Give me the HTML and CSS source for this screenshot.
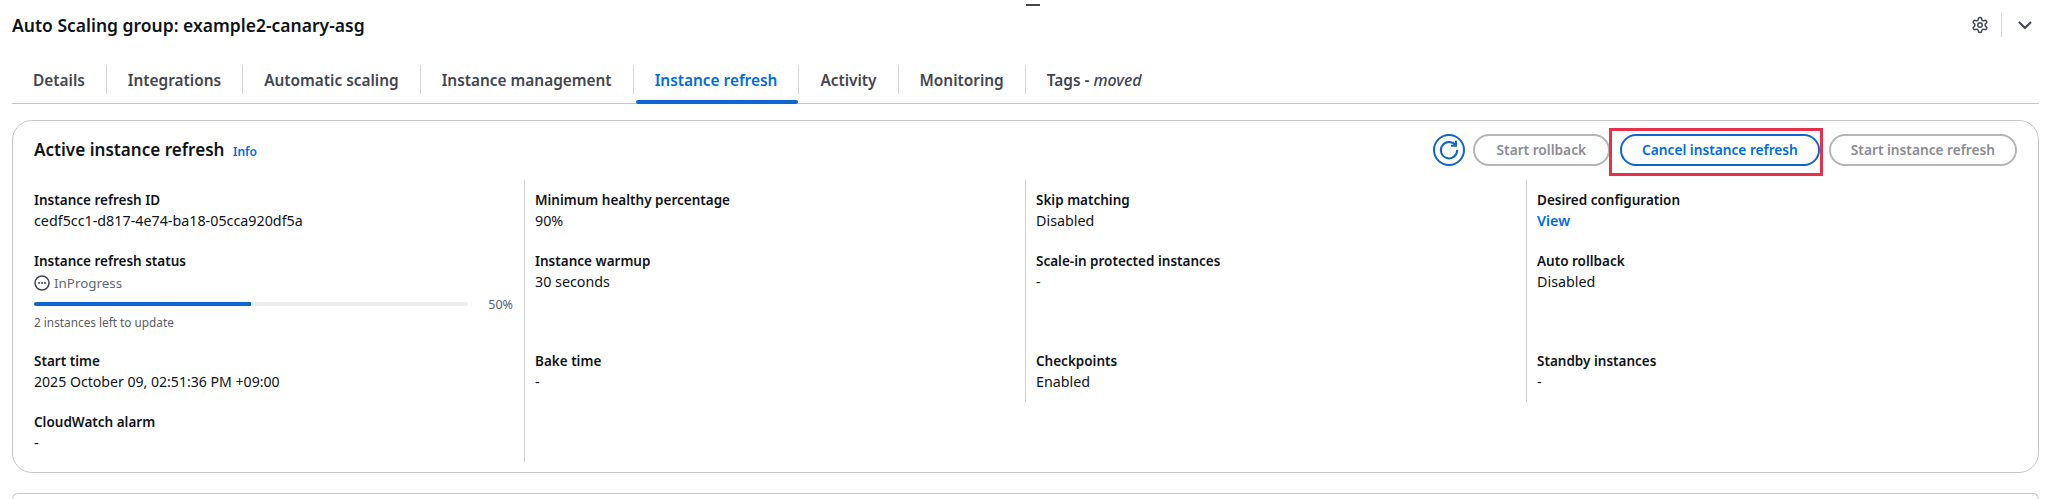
FILE: index.html
```html
<!DOCTYPE html>
<html lang="en">
<head>
<meta charset="utf-8">
<title>Auto Scaling group: example2-canary-asg</title>
<link rel="stylesheet" href="styles.css">
</head>
<body>
<div class="resize-mark"></div>
<div class="page">
  <header class="page-header">
    <h1 class="page-title">Auto Scaling group: example2-canary-asg</h1>
    <div class="page-tools">
      <svg class="icon-gear" viewBox="0 0 24 24" width="18" height="18"><path d="M12.22 2h-.44a2 2 0 0 0-2 2v.18a2 2 0 0 1-1 1.73l-.43.25a2 2 0 0 1-2 0l-.15-.08a2 2 0 0 0-2.73.73l-.22.38a2 2 0 0 0 .73 2.73l.15.1a2 2 0 0 1 1 1.72v.51a2 2 0 0 1-1 1.74l-.15.09a2 2 0 0 0-.73 2.73l.22.38a2 2 0 0 0 2.73.73l.15-.08a2 2 0 0 1 2 0l.43.25a2 2 0 0 1 1 1.73V20a2 2 0 0 0 2 2h.44a2 2 0 0 0 2-2v-.18a2 2 0 0 1 1-1.73l.43-.25a2 2 0 0 1 2 0l.15.08a2 2 0 0 0 2.73-.73l.22-.39a2 2 0 0 0-.73-2.73l-.15-.08a2 2 0 0 1-1-1.74v-.5a2 2 0 0 1 1-1.74l.15-.09a2 2 0 0 0 .73-2.73l-.22-.38a2 2 0 0 0-2.73-.73l-.15.08a2 2 0 0 1-2 0l-.43-.25a2 2 0 0 1-1-1.73V4a2 2 0 0 0-2-2z"/><circle cx="12" cy="12" r="3"/></svg>
      <span class="tools-divider"></span>
      <svg class="icon-chevron" viewBox="0 0 16 10" width="16" height="10"><path d="M2 2l6 6 6-6"/></svg>
    </div>
  </header>

  <nav class="tabs">
    <a class="tab"><span class="tab-label">Details</span></a>
    <a class="tab"><span class="tab-label">Integrations</span></a>
    <a class="tab"><span class="tab-label">Automatic scaling</span></a>
    <a class="tab"><span class="tab-label">Instance management</span></a>
    <a class="tab tab-active"><span class="tab-label">Instance refresh</span></a>
    <a class="tab"><span class="tab-label">Activity</span></a>
    <a class="tab"><span class="tab-label">Monitoring</span></a>
    <a class="tab"><span class="tab-label tab-label-last">Tags - <em>moved</em></span></a>
  </nav>

  <section class="card">
    <div class="card-header">
      <h2 class="card-title">Active instance refresh <a class="info-link">Info</a></h2>
      <div class="card-actions">
        <button class="btn-icon" type="button">
          <svg viewBox="0 0 32 32" width="32" height="32"><path d="M22.3 10.9a8.2 8.2 0 1 0 1.9 5.1"/><path d="M23 6.8v5h-5"/></svg>
        </button>
        <button class="btn btn-disabled btn-rollback" type="button">Start rollback</button>
        <span class="highlight">
          <button class="btn btn-primary" type="button">Cancel instance refresh</button>
        </span>
        <button class="btn btn-disabled" type="button">Start instance refresh</button>
      </div>
    </div>

    <div class="details">
      <div class="cell"><div class="label">Instance refresh ID</div><div class="value">cedf5cc1-d817-4e74-ba18-05cca920df5a</div></div>
      <div class="cell"><div class="label">Minimum healthy percentage</div><div class="value">90%</div></div>
      <div class="cell"><div class="label">Skip matching</div><div class="value">Disabled</div></div>
      <div class="cell"><div class="label">Desired configuration</div><div class="value"><a class="value-link">View</a></div></div>

      <div class="cell">
        <div class="label">Instance refresh status</div>
        <div class="status">
          <svg viewBox="0 0 16 16" width="16" height="16"><circle cx="8" cy="8" r="7"/><circle class="dot" cx="5" cy="8" r="1"/><circle class="dot" cx="8" cy="8" r="1"/><circle class="dot" cx="11" cy="8" r="1"/></svg>
          <span>InProgress</span>
        </div>
        <div class="progress">
          <div class="progress-track"><div class="progress-fill" style="width:50%"></div></div>
          <span class="progress-pct">50%</span>
        </div>
        <div class="progress-note">2 instances left to update</div>
      </div>
      <div class="cell"><div class="label">Instance warmup</div><div class="value">30 seconds</div></div>
      <div class="cell"><div class="label">Scale-in protected instances</div><div class="value">-</div></div>
      <div class="cell"><div class="label">Auto rollback</div><div class="value">Disabled</div></div>

      <div class="cell"><div class="label">Start time</div><div class="value value-date">2025 October 09, 02:51:36 PM +09:00</div></div>
      <div class="cell"><div class="label">Bake time</div><div class="value">-</div></div>
      <div class="cell"><div class="label">Checkpoints</div><div class="value">Enabled</div></div>
      <div class="cell"><div class="label">Standby instances</div><div class="value">-</div></div>

      <div class="cell cell-last"><div class="label">CloudWatch alarm</div><div class="value">-</div></div>
      <div class="cell cell-last"></div>
    </div>
  </section>

  <section class="card card-next"></section>
</div>
</body>
</html>
```

FILE: styles.css
```css
* { box-sizing: border-box; }

html, body {
  margin: 0;
  height: 499px;
  overflow: hidden;
  background: #fff;
}

body {
  font-family: "Noto Sans", "Open Sans", sans-serif;
  color: #0f141a;
  position: relative;
}

.resize-mark {
  position: absolute;
  left: 1026px;
  top: 4px;
  width: 14px;
  height: 2px;
  background: #424650;
}

.page {
  padding: 13px 9px 0 12px;
}

.page-header {
  display: flex;
  align-items: center;
  justify-content: space-between;
  height: 24px;
  margin-bottom: 28px;
}

.page-title {
  margin: 0;
  font-size: 17.5px;
  font-weight: 600;
  line-height: 24px;
}

.page-tools {
  display: flex;
  align-items: center;
  padding-right: 6px;
}

.icon-gear {
  fill: none;
  stroke: #424650;
  stroke-width: 2;
  margin-right: 12px;
}

.tools-divider {
  width: 1px;
  height: 24px;
  background: #d5d5da;
  margin-right: 15px;
}

.icon-chevron {
  fill: none;
  stroke: #424650;
  stroke-width: 2;
}

.tabs {
  display: flex;
  height: 39px;
  border-bottom: 1px solid #c6c6cd;
}

.tab {
  display: block;
  color: #424650;
  font-size: 15.4px;
  font-weight: 600;
}

.tab::after {
  content: "";
  display: block;
  height: 4px;
  margin: 6px 1px 0 2px;
  border-radius: 2px;
}

.tab-label {
  display: block;
  height: 29px;
  line-height: 31px;
  padding: 0 21px;
  border-right: 1px solid #d5d5da;
  white-space: nowrap;
}

.tab-label-last { border-right: 0; }

.tab-label em {
  font-size: 16px;
  font-weight: 500;
}

.tab-active { color: #006ce0; }

.tab-active::after { background: #1066d0; }

.card {
  margin-top: 16px;
  border: 1px solid #c6c6cd;
  border-radius: 20px;
  padding: 0 11px 10px 21px;
}

.card-header {
  display: flex;
  align-items: center;
  justify-content: space-between;
  height: 59px;
  padding: 0 10px 2px 0;
}

.card-title {
  margin: 2px 0 0;
  font-size: 17.1px;
  font-weight: 600;
  line-height: 24px;
}

.info-link {
  margin-left: 4px;
  font-size: 12px;
  font-weight: 600;
  color: #006ce0;
}

.card-actions {
  display: flex;
  align-items: center;
}

.btn-icon {
  width: 32px;
  height: 32px;
  padding: 0;
  border: 2px solid #1066d0;
  border-radius: 50%;
  background: #fff;
  margin-right: 8px;
  display: flex;
  align-items: center;
  justify-content: center;
}

.btn-icon svg {
  flex: none;
  fill: none;
  stroke: #1066d0;
  stroke-width: 2;
}

.btn {
  height: 32px;
  padding: 0 20px;
  border: 2px solid;
  border-radius: 16px;
  background: #fff;
  font-family: inherit;
  font-size: 13.7px;
  font-weight: 600;
  white-space: nowrap;
}

.btn-disabled {
  border-color: #b4b4bb;
  color: #8c8c94;
}

.btn-rollback {
  margin-right: 10px;
  padding: 0 22px;
}

.btn-primary {
  display: block;
  border-color: #1066d0;
  color: #006ce0;
}

.highlight {
  position: relative;
  display: block;
  margin-right: 9px;
}

.highlight::after {
  content: "";
  position: absolute;
  left: -11px;
  right: -3px;
  top: -6px;
  bottom: -10px;
  border: 3px solid #e8304a;
}

.details {
  display: grid;
  grid-template-columns: 490px 1fr 1fr 1fr;
}

.cell {
  padding: 10px 0 10px 10px;
  border-left: 1px solid #d0d0d5;
}

.cell:nth-child(4n + 1) {
  padding-left: 0;
  border-left: 0;
}

.cell-last { padding-bottom: 9px; }

.label {
  font-size: 13.5px;
  font-weight: 600;
  line-height: 20px;
}

.value {
  font-size: 14.3px;
  line-height: 21px;
}

.value-date { font-size: 14.1px; }

.value-link {
  color: #006ce0;
  font-weight: 600;
}

.status {
  display: flex;
  align-items: center;
  gap: 4px;
  height: 23px;
  font-size: 13.4px;
  color: #5f6b7a;
}

.status svg {
  fill: none;
  stroke: #424650;
  stroke-width: 1.5;
}

.status .dot {
  fill: #424650;
  stroke: none;
}

.progress {
  display: flex;
  align-items: center;
  height: 20px;
  padding-right: 11px;
}

.progress-track {
  flex: 1;
  height: 4px;
  border-radius: 2px;
  background: #ebebf0;
  margin-right: 20px;
}

.progress-fill {
  height: 100%;
  border-radius: 2px 0 0 2px;
  background: #1066d0;
}

.progress-pct {
  font-size: 12.5px;
  color: #5b6068;
}

.progress-note {
  font-size: 11.8px;
  line-height: 17px;
  color: #5b6068;
}

.card-next {
  margin-top: 20px;
  height: 6px;
  padding: 0;
  border-bottom: 0;
  border-radius: 20px 20px 0 0;
}
```
